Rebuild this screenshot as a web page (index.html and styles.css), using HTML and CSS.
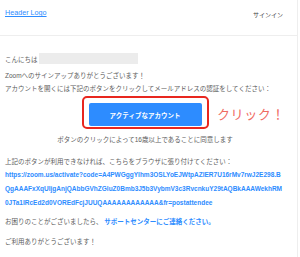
FILE: index.html
```html
<!DOCTYPE html>
<html lang="ja">
<head>
  <meta charset="UTF-8">
  <title>Zoom アカウント認証</title>
  <link rel="stylesheet" href="styles.css">
</head>
<body>
  <div class="mail">
    <div class="header">
      <a class="logo" href="#">Header Logo</a>
      <span class="signin">サインイン</span>
    </div>
    <div class="content">
      <div class="greeting">
        <span>こんにちは</span>
        <span class="name-box"></span>
      </div>
      <p class="line">Zoomへのサインアップありがとうございます！</p>
      <p class="line">アカウントを開くには下記のボタンをクリックしてメールアドレスの認証をしてください：</p>
      <div class="cta-row">
        <div class="cta-frame">
          <a class="cta-button" href="#">アクティブなアカウント</a>
        </div>
        <span class="click-note">クリック！</span>
      </div>
      <p class="line consent">ボタンのクリックによって16歳以上であることに同意します</p>
      <p class="line paste">上記のボタンが利用できなければ、こちらをブラウザに張り付けてください：</p>
      <a class="url" href="#">https://zoom.us/activate?code=A4PWGggYIhm3OSLYoEJWtpAZIER7U16rMv7rwJ2E298.B<br>QgAAAFxXqUIjgAnjQAbbGVhZGluZ0Bmb3J5b3VybmV3c3RvcnkuY29tAQBkAAAWekhRM<br>0JTa1IRcEd2d0VOREdFcjJUUQAAAAAAAAAAAA&amp;fr=postattendee</a>
      <p class="line help">お困りのことがございましたら、 <a class="support" href="#">サポートセンターにご連絡ください。</a></p>
      <p class="line thanks">ご利用ありがとうございます！</p>
    </div>
  </div>
</body>
</html>
```

FILE: styles.css
```css
body {
  margin: 0;
  background-color: #fff;
  font-family: "Liberation Sans", "Noto Sans CJK JP", sans-serif;
  color: #5c5c5c;
}

.mail {
  width: 297px;
  height: 257px;
  border-right: 1px solid #eee;
}

.header {
  display: flex;
  justify-content: space-between;
  align-items: flex-start;
  height: 35px;
  padding: 0 14px 0 5px;
  border-bottom: 1px solid #eee;
}

.logo {
  margin-top: 8px;
  font-size: 7.2px;
  line-height: 9px;
  color: #2d8cff;
}

.signin {
  margin-top: 11px;
  font-size: 6px;
  line-height: 8px;
  color: #444;
}

.content {
  padding: 0 12px 0 5px;
}

.greeting {
  display: flex;
  align-items: center;
  height: 11px;
  margin-top: 17px;
  font-size: 6.5px;
}

.name-box {
  width: 99px;
  height: 11px;
  margin-left: 1px;
  background-color: #ececec;
}

.line {
  margin: 0;
  font-size: 6.5px;
  line-height: 13px;
  white-space: nowrap;
}

.greeting + .line {
  margin-top: 4.5px;
}

.cta-row {
  position: relative;
  display: flex;
  justify-content: center;
  margin-top: 1.5px;
}

.cta-frame {
  padding: 5px 5px 1px 5px;
  border: 2px solid #e8271f;
  border-radius: 5px;
}

.cta-button {
  display: flex;
  justify-content: center;
  align-items: center;
  width: 113px;
  height: 23px;
  border-radius: 2px;
  background-color: #2d8cff;
  color: #fff;
  font-size: 6.5px;
  font-weight: bold;
  text-decoration: none;
}

.click-note {
  position: absolute;
  left: 212px;
  top: 12px;
  font-size: 13px;
  line-height: 13px;
  letter-spacing: 0.6px;
  color: #ef6a62;
  white-space: nowrap;
}

.consent {
  margin-top: 3.5px;
  text-align: center;
}

.paste {
  margin-top: 9px;
}

.url {
  display: block;
  margin-top: 0.5px;
  font-size: 6.5px;
  line-height: 14px;
  font-weight: bold;
  color: #2d8cff;
  text-decoration: none;
  white-space: nowrap;
}

.help {
  margin-top: 4.5px;
}

.support {
  font-weight: bold;
  color: #2d8cff;
  text-decoration: none;
}

.thanks {
  margin-top: 7px;
}
```
